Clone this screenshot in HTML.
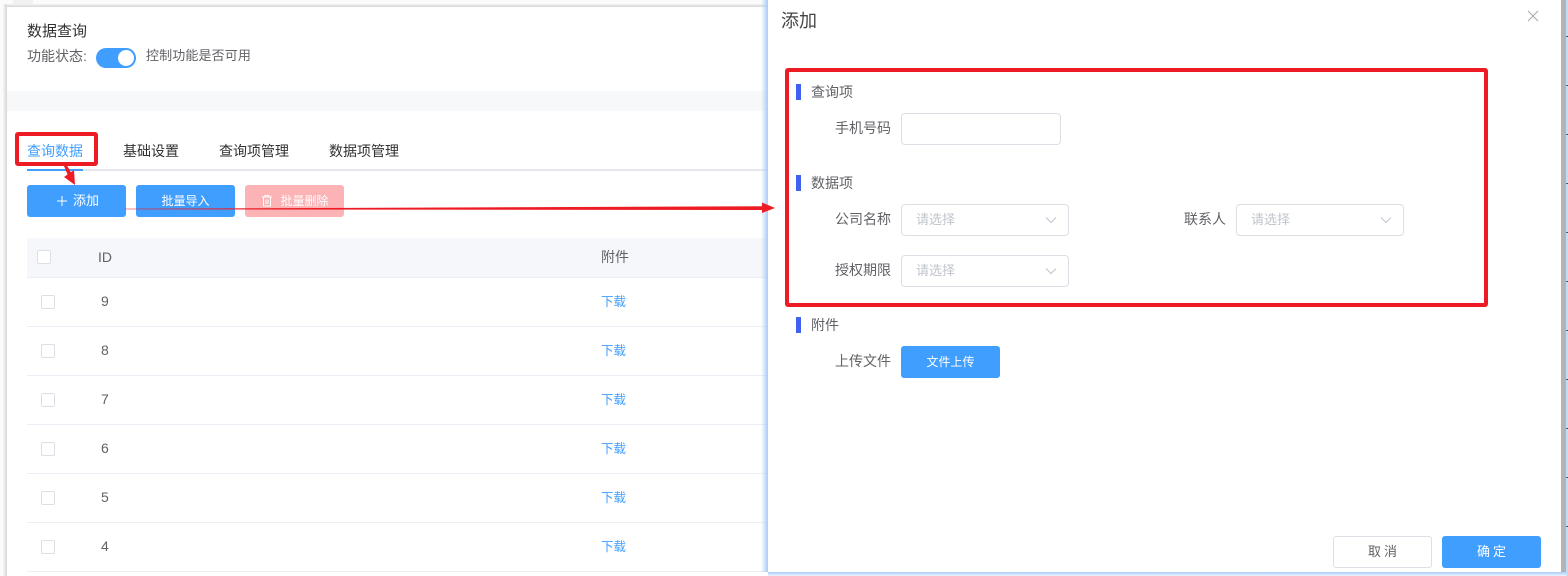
<!DOCTYPE html>
<html lang="zh">
<head>
<meta charset="utf-8">
<style>
html,body{margin:0;padding:0;width:1568px;height:576px;overflow:hidden;background:#fff}
body{font-family:"Liberation Sans","Noto Sans CJK SC",sans-serif;font-size:14px;color:#606266;position:relative}
.a{position:absolute;box-sizing:border-box}
.t{position:absolute;white-space:nowrap;line-height:20px}
.btn{position:absolute;box-sizing:border-box;height:32px;width:99px;background:#409eff;border-radius:3px;color:#fff;font-size:12px;line-height:32px;text-align:center}
.cb{position:absolute;width:14px;height:14px;box-sizing:border-box;border:1px solid #dcdfe6;border-radius:2px;background:#fff}
.sel{position:absolute;box-sizing:border-box;width:168px;height:32px;border:1px solid #dcdfe6;border-radius:4px;background:#fff}
.sel span{position:absolute;left:14px;top:5px;line-height:20px;font-size:13px;color:#c0c4cc}
.sel svg{position:absolute;right:11px;top:11px}
.bar{position:absolute;left:796px;width:5px;height:16px;background:#4060f0}
.line{position:absolute;left:27px;width:741px;height:1px;background:#ebeef5}
.dl{position:absolute;left:601px;font-size:12.5px;line-height:20px;color:#409eff}
.n{position:absolute;left:101px;line-height:20px;font-size:14px;color:#606266}
.l{position:absolute;font-size:14px;line-height:20px;color:#606266;white-space:nowrap}
.tick{position:absolute;left:1566px;width:2px;height:1px;background:#3a5a9a}
</style>
</head>
<body>
<!-- outer backdrop -->
<div class="a" style="left:0;top:0;width:768px;height:576px;background:#fbfbfb"></div>
<div class="a" style="left:13px;top:0;width:20px;height:5px;background:#f1f1f1"></div>
<div class="a" style="left:3px;top:4px;width:765px;height:3px;background:linear-gradient(180deg,#f4f4f4,#d6d6d6)"></div>
<div class="a" style="left:3px;top:4px;width:4px;height:572px;background:linear-gradient(90deg,#f6f6f6,#d6d6d6)"></div>
<div class="a" style="left:7px;top:7px;width:761px;height:569px;background:#fff"></div>
<div class="a" style="left:7px;top:91px;width:761px;height:20px;background:#f7f8fa"></div>

<div class="t" style="left:27px;top:22px;color:#303133;font-size:15px">数据查询</div>
<div class="t" style="left:27px;top:46px;font-size:14px">功能状态:</div>
<div class="a" style="left:96px;top:48px;width:40px;height:20px;border-radius:10px;background:#409eff"></div>
<div class="a" style="left:118px;top:50px;width:16px;height:16px;border-radius:50%;background:#fff"></div>
<div class="t" style="left:146px;top:46px;font-size:13px;letter-spacing:.13px">控制功能是否可用</div>

<div class="t" style="left:27px;top:141px;color:#409eff">查询数据</div>
<div class="t" style="left:123px;top:141px;color:#303133">基础设置</div>
<div class="t" style="left:219px;top:141px;color:#303133">查询项管理</div>
<div class="t" style="left:329px;top:141px;color:#303133">数据项管理</div>
<div class="a" style="left:27px;top:169px;width:741px;height:2px;background:#e4e7ed"></div>
<div class="a" style="left:27px;top:169px;width:56px;height:2px;background:#409eff"></div>

<div class="btn" style="left:27px;top:185px;text-indent:19px;font-size:13px">添加</div>
<svg class="a" style="left:56px;top:195px" width="12" height="12" viewBox="0 0 12 12"><path d="M6 1V11M1 6H11" stroke="#fff" stroke-width="1" fill="none"/></svg>
<div class="btn" style="left:136px;top:185px">批量导入</div>
<div class="btn" style="left:245px;top:185px;background:#fbb3b6;text-indent:20px">批量删除</div>
<svg class="a" style="left:261px;top:194px" width="12" height="13" viewBox="0 0 12 13"><path d="M1 3H11M4 3V1.500H8V3M2.500 3V12H9.500V3M5 5.500V10M7 5.500V10" stroke="#fff" stroke-width="1" fill="none"/></svg>

<!-- table -->
<div class="a" style="left:27px;top:238px;width:741px;height:40px;background:#f5f7fa;border-bottom:1px solid #ebeef5"></div>
<div class="cb" style="left:37px;top:250px"></div>
<div class="t" style="left:98px;top:247px">ID</div>
<div class="t" style="left:601px;top:247px">附件</div>

<div class="cb" style="left:41px;top:295px"></div><div class="n" style="top:291px">9</div><div class="dl" style="top:292px">下载</div><div class="line" style="top:326px"></div>
<div class="cb" style="left:41px;top:344px"></div><div class="n" style="top:340px">8</div><div class="dl" style="top:341px">下载</div><div class="line" style="top:375px"></div>
<div class="cb" style="left:41px;top:393px"></div><div class="n" style="top:389px">7</div><div class="dl" style="top:390px">下载</div><div class="line" style="top:424px"></div>
<div class="cb" style="left:41px;top:442px"></div><div class="n" style="top:438px">6</div><div class="dl" style="top:439px">下载</div><div class="line" style="top:473px"></div>
<div class="cb" style="left:41px;top:491px"></div><div class="n" style="top:487px">5</div><div class="dl" style="top:488px">下载</div><div class="line" style="top:522px"></div>
<div class="cb" style="left:41px;top:540px"></div><div class="n" style="top:536px">4</div><div class="dl" style="top:537px">下载</div><div class="line" style="top:571px"></div>

<!-- dialog shadow -->
<div class="a" style="left:761px;top:0;width:7px;height:572px;background:linear-gradient(90deg,rgba(170,208,250,0),#a8ccf8)"></div>
<div class="a" style="left:768px;top:572px;width:800px;height:4px;background:linear-gradient(180deg,#a8ccf8,#eef5fe)"></div>
<div class="a" style="left:1561px;top:0;width:5px;height:572px;background:#b3b3b3"></div>
<div class="a" style="left:1566px;top:0;width:2px;height:576px;background:#c4dbf8"></div>
<div class="tick" style="top:36px"></div><div class="tick" style="top:85px"></div><div class="tick" style="top:134px"></div><div class="tick" style="top:183px"></div><div class="tick" style="top:232px"></div><div class="tick" style="top:281px"></div><div class="tick" style="top:330px"></div><div class="tick" style="top:379px"></div><div class="tick" style="top:428px"></div><div class="tick" style="top:477px"></div><div class="tick" style="top:526px"></div>

<!-- dialog -->
<div class="a" style="left:768px;top:0;width:793px;height:572px;background:#fff"></div>
<div class="t" style="left:781px;top:11px;font-size:18px;color:#454545">添加</div>
<svg class="a" style="left:1527px;top:10px" width="12" height="12" viewBox="0 0 12 12"><path d="M1 1L11 11M11 1L1 11" stroke="#a6a9ad" stroke-width="1" fill="none"/></svg>

<div class="bar" style="top:84px"></div>
<div class="l" style="left:811px;top:82px">查询项</div>
<div class="l" style="left:835px;top:118px">手机号码</div>
<div class="sel" style="left:901px;top:113px;width:160px"></div>

<div class="bar" style="top:175px"></div>
<div class="l" style="left:811px;top:173px">数据项</div>
<div class="l" style="left:835px;top:209px">公司名称</div>
<div class="sel" style="left:901px;top:204px"><span>请选择</span><svg width="12" height="8" viewBox="0 0 12 8"><path d="M1 1.500L6 6.500L11 1.500" stroke="#c0c4cc" stroke-width="1" fill="none"/></svg></div>
<div class="l" style="left:1184px;top:209px">联系人</div>
<div class="sel" style="left:1236px;top:204px"><span>请选择</span><svg width="12" height="8" viewBox="0 0 12 8"><path d="M1 1.500L6 6.500L11 1.500" stroke="#c0c4cc" stroke-width="1" fill="none"/></svg></div>
<div class="l" style="left:835px;top:260px">授权期限</div>
<div class="sel" style="left:901px;top:255px"><span>请选择</span><svg width="12" height="8" viewBox="0 0 12 8"><path d="M1 1.500L6 6.500L11 1.500" stroke="#c0c4cc" stroke-width="1" fill="none"/></svg></div>

<div class="bar" style="top:317px"></div>
<div class="l" style="left:811px;top:315px">附件</div>
<div class="l" style="left:835px;top:351px">上传文件</div>
<div class="btn" style="left:901px;top:346px">文件上传</div>

<div class="btn" style="left:1333px;top:536px;background:#fff;border:1px solid #dcdfe6;color:#606266;line-height:30px;font-size:13px;letter-spacing:3px;text-indent:3px">取消</div>
<div class="btn" style="left:1442px;top:536px;font-size:13px;letter-spacing:3px;text-indent:3px">确定</div>

<!-- annotations -->
<svg class="a" style="left:0;top:0" width="1568" height="576" viewBox="0 0 1568 576">
<rect x="17" y="134" width="79" height="30" fill="none" stroke="#ed1c24" stroke-width="4" rx="1"/>
<rect x="787" y="70" width="699" height="235" fill="none" stroke="#ed1c24" stroke-width="4" rx="1"/>
<path d="M64 166L67 165.500L73 176L69 178Z" fill="#ed1c24"/>
<path d="M75 185L64 177L74 170Z" fill="#ed1c24"/>
<path d="M125 208.700L125 209.300L762 210L762 206.200Z" fill="#ed1c24"/>
<path d="M762 202.500L775 208L762 213Z" fill="#ed1c24"/>
</svg>
</body>
</html>
